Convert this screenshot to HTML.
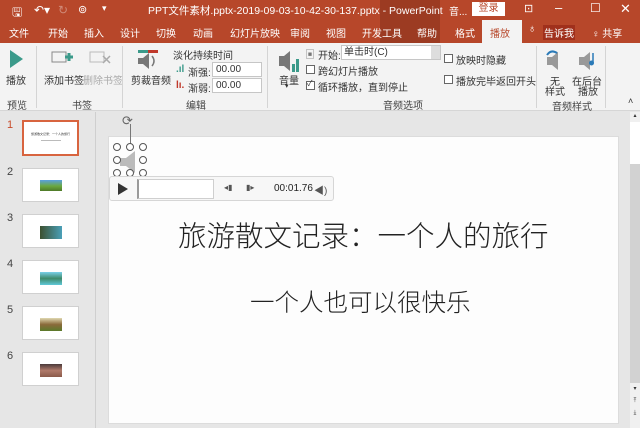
<!DOCTYPE html>
<html><head><meta charset="utf-8"><style>
*{margin:0;padding:0;box-sizing:border-box}
body{width:640px;height:428px;overflow:hidden;background:#e6e6e6;font-family:"Liberation Sans","Noto Sans CJK SC",sans-serif;font-size:10px;color:#333;position:relative}
.a{position:absolute;white-space:nowrap}
.w{color:#fff}
.cb{position:absolute;width:9px;height:9px;border:1px solid #666;background:#fff}
.th{position:absolute;left:22px;width:57px;background:#fff;border:1px solid #d0d0d0}
.num{position:absolute;left:7px;font-size:11px;color:#444}
.gl{position:absolute;top:97px;font-size:10px;color:#444}
.sep{position:absolute;top:46px;width:1px;height:62px;background:#d4d4d4}
.h{position:absolute;width:8px;height:8px;border:1px solid #555;border-radius:50%;background:#fff}
</style></head><body>
<div class="a" style="left:0;top:0;width:640px;height:43px;background:#b7472a"></div>
<div class="a" style="left:380px;top:0;width:60px;height:43px;background:#9c3b22"></div>
<div class="a w" style="left:12px;top:3px;font-size:12px">🖫</div>
<div class="a w" style="left:34px;top:3px;font-size:12px">↶▾</div>
<div class="a" style="left:58px;top:3px;font-size:12px;color:#d08a78">↻</div>
<div class="a w" style="left:78px;top:3px;font-size:11px">⊚</div>
<div class="a w" style="left:102px;top:3px;font-size:9px">▾</div>
<div class="a w" style="left:148px;top:3px;font-size:10.5px">PPT文件素材.pptx-2019-09-03-10-42-30-137.pptx  -  PowerPoint</div>
<div class="a w" style="left:449px;top:3px;font-size:10px">音...</div>
<div class="a" style="left:472px;top:2px;width:33px;height:14px;background:#fff;color:#b7472a;font-size:10px;text-align:center;line-height:14px">登录</div>
<div class="a w" style="left:524px;top:2px;font-size:11px">⊡</div>
<div class="a w" style="left:555px;top:0px;font-size:13px">–</div>
<div class="a w" style="left:590px;top:1px;font-size:12px">☐</div>
<div class="a w" style="left:620px;top:1px;font-size:13px">✕</div>
<div class="a w" style="left:9px;top:25px">文件</div>
<div class="a w" style="left:48px;top:25px">开始</div>
<div class="a w" style="left:84px;top:25px">插入</div>
<div class="a w" style="left:120px;top:25px">设计</div>
<div class="a w" style="left:156px;top:25px">切换</div>
<div class="a w" style="left:193px;top:25px">动画</div>
<div class="a w" style="left:230px;top:25px">幻灯片放映</div>
<div class="a w" style="left:290px;top:25px">审阅</div>
<div class="a w" style="left:326px;top:25px">视图</div>
<div class="a w" style="left:362px;top:25px">开发工具</div>
<div class="a w" style="left:417px;top:25px">帮助</div>
<div class="a w" style="left:455px;top:25px">格式</div>
<div class="a" style="left:482px;top:20px;width:40px;height:23px;background:#f3f3f3"></div>
<div class="a" style="left:490px;top:25px;color:#b7472a">播放</div>
<div class="a w" style="left:528px;top:23px;font-size:11px">♁</div>
<div class="a" style="left:543px;top:25px;color:#fff;background:#a0301c;padding:0 1px">告诉我</div>
<div class="a w" style="left:592px;top:25px">♀ 共享</div>
<div class="a" style="left:0;top:43px;width:640px;height:68px;background:#f3f3f3;border-bottom:1px solid #d6d6d6"></div>
<svg class="a" style="left:8px;top:49px" width="16" height="20"><path d="M2 1L15 10L2 19Z" fill="#3b9a8a"/></svg>
<div class="a" style="left:6px;top:72px">播放</div>
<div class="gl" style="left:7px">预览</div>
<div class="sep" style="left:36px"></div>
<svg class="a" style="left:50px;top:48px" width="24" height="20"><rect x="2" y="4" width="14" height="10" fill="none" stroke="#888"/><path d="M15 9h8M19 5v8" stroke="#3b9a8a" stroke-width="3"/></svg>
<svg class="a" style="left:88px;top:48px" width="24" height="20"><rect x="2" y="4" width="14" height="10" fill="none" stroke="#bbb"/><path d="M15 8l7 7M22 8l-7 7" stroke="#aaa" stroke-width="1.5"/></svg>
<div class="a" style="left:44px;top:72px">添加书签</div>
<div class="a" style="left:83px;top:72px;color:#aaa">删除书签</div>
<div class="gl" style="left:72px">书签</div>
<div class="sep" style="left:122px"></div>
<svg class="a" style="left:135px;top:48px" width="26" height="24"><rect x="3" y="2" width="20" height="3" fill="#3b9a8a"/><rect x="13" y="2" width="10" height="3" fill="#c0392b"/><path d="M3 10h5l6-5v16l-6-5H3z" fill="#777"/><path d="M17 8q4 5 0 10" stroke="#777" fill="none" stroke-width="1.5"/></svg>
<div class="a" style="left:131px;top:72px">剪裁音频</div>
<div class="a" style="left:173px;top:47px">淡化持续时间</div>
<div class="a" style="left:176px;top:64px;color:#3b9a8a;font-weight:bold">.ıl</div>
<div class="a" style="left:188px;top:64px">渐强:</div>
<div class="a" style="left:212px;top:62px;width:50px;height:15px;background:#fff;border:1px solid #c6c6c6;padding-left:3px;line-height:13px">00.00</div>
<div class="a" style="left:176px;top:80px;color:#c0392b;font-weight:bold">lı.</div>
<div class="a" style="left:188px;top:80px">渐弱:</div>
<div class="a" style="left:212px;top:78px;width:50px;height:15px;background:#fff;border:1px solid #c6c6c6;padding-left:3px;line-height:13px">00.00</div>
<div class="gl" style="left:186px">编辑</div>
<div class="sep" style="left:267px"></div>
<svg class="a" style="left:277px;top:49px" width="24" height="24"><path d="M2 7h5l6-5v20l-6-5H2z" fill="#777"/><rect x="15" y="15" width="3" height="8" fill="#3b9a8a"/><rect x="19" y="10" width="3" height="13" fill="#3b9a8a"/></svg>
<div class="a" style="left:279px;top:72px">音量</div>
<div class="a" style="left:285px;top:82px;font-size:7px">▾</div>
<div class="a" style="left:305px;top:46px;font-size:10px;color:#777">▣</div>
<div class="a" style="left:318px;top:47px">开始:</div>
<div class="a" style="left:341px;top:45px;width:100px;height:15px;background:#fff;border:1px solid #c6c6c6;padding-left:2px;line-height:13px">单击时(C)</div>
<div class="a" style="left:431px;top:46px;width:9px;height:13px;background:#ddd"></div>
<div class="cb" style="left:306px;top:65px"></div><div class="a" style="left:318px;top:63px">跨幻灯片播放</div>
<div class="cb" style="left:306px;top:81px"></div><div class="a" style="left:307px;top:78px;font-size:8px">✓</div><div class="a" style="left:318px;top:79px">循环播放，直到停止</div>
<div class="cb" style="left:444px;top:54px"></div><div class="a" style="left:456px;top:52px">放映时隐藏</div>
<div class="cb" style="left:444px;top:75px"></div><div class="a" style="left:456px;top:73px">播放完毕返回开头</div>
<div class="gl" style="left:383px">音频选项</div>
<div class="sep" style="left:536px"></div>
<svg class="a" style="left:543px;top:47px" width="22" height="24"><path d="M4 10h5l6-5v18l-6-5H4z" fill="#999"/><path d="M4 8q4-6 10-2" stroke="#2a7ab8" stroke-width="2" fill="none"/></svg>
<div class="a" style="left:550px;top:73px">无</div><div class="a" style="left:545px;top:83px">样式</div>
<svg class="a" style="left:577px;top:47px" width="22" height="24"><path d="M2 10h5l6-5v18l-6-5H2z" fill="#999"/><path d="M16 6v10" stroke="#2a7ab8" stroke-width="1.5"/><circle cx="14.5" cy="16" r="2.5" fill="#2a7ab8"/></svg>
<div class="a" style="left:572px;top:73px">在后台</div><div class="a" style="left:578px;top:83px">播放</div>
<div class="gl" style="left:552px;top:98px">音频样式</div>
<div class="sep" style="left:605px"></div>
<div class="a" style="left:628px;top:96px;font-size:9px">˄</div>
<div class="a" style="left:95px;top:112px;width:1px;height:316px;background:#cfcfcf"></div>
<div class="num" style="top:119px;color:#c84b2b">1</div>
<div class="th" style="top:120px;height:36px;border:2px solid #d8643f"><div style="font-size:3px;text-align:center;margin-top:10px;color:#333">旅游散文记录：一个人的旅行</div><div style="height:1px;width:20px;background:#bbb;margin:4px auto"></div></div>
<div class="num" style="top:166px">2</div>
<div class="th" style="top:168px;height:34px"><div style="width:22px;height:11px;margin:11px auto 0;background:linear-gradient(#5aa0e0,#6aa840 55%,#4e7a28)"></div></div>
<div class="num" style="top:212px">3</div>
<div class="th" style="top:214px;height:34px"><div style="width:22px;height:13px;margin:11px auto 0;background:linear-gradient(90deg,#3c5030,#4aa0b8)"></div></div>
<div class="num" style="top:258px">4</div>
<div class="th" style="top:260px;height:34px"><div style="width:22px;height:13px;margin:11px auto 0;background:linear-gradient(#7ad0e8,#3e8a6a 50%,#60c8d8)"></div></div>
<div class="num" style="top:304px">5</div>
<div class="th" style="top:306px;height:34px"><div style="width:22px;height:13px;margin:11px auto 0;background:linear-gradient(#e0d8b0,#8a6a3a 50%,#5a7a2a)"></div></div>
<div class="num" style="top:350px">6</div>
<div class="th" style="top:352px;height:34px"><div style="width:22px;height:13px;margin:11px auto 0;background:linear-gradient(#4a3a3a,#b07a6a 50%,#8a5a4a)"></div></div>
<div class="a" style="left:108px;top:136px;width:511px;height:288px;background:#fdfdfd;border:1px solid #dcdcdc"></div>
<div class="a" style="left:178px;top:214px;font-size:28.5px;color:#222;font-family:'Noto Sans CJK SC',sans-serif;font-weight:300">旅游散文记录：一个人的旅行</div>
<div class="a" style="left:250px;top:284px;font-size:24.5px;color:#222;font-family:'Noto Sans CJK SC',sans-serif;font-weight:300">一个人也可以很快乐</div>
<div class="a" style="left:130px;top:124px;width:1px;height:22px;background:#777"></div>
<div class="a" style="left:122px;top:113px;font-size:13px;color:#666">⟳</div>
<svg class="a" style="left:112px;top:145px" width="36" height="34"><path d="M8 13h6l9-7v22l-9-7H8z" fill="#bbb"/></svg>
<div class="h" style="left:113px;top:143px"></div><div class="h" style="left:126px;top:143px"></div><div class="h" style="left:139px;top:143px"></div>
<div class="h" style="left:113px;top:156px"></div><div class="h" style="left:139px;top:156px"></div>
<div class="h" style="left:113px;top:169px"></div><div class="h" style="left:126px;top:169px"></div><div class="h" style="left:139px;top:169px"></div>
<div class="a" style="left:109px;top:176px;width:225px;height:25px;background:#f7f7f7;border:1px solid #d6d6d6;border-radius:3px"></div>
<svg class="a" style="left:117px;top:182px" width="12" height="14"><path d="M1 1L11 7L1 13Z" fill="#333"/></svg>
<div class="a" style="left:137px;top:179px;width:77px;height:20px;background:#fff;border:1px solid #cfcfcf;border-left:2px solid #999"></div>
<div class="a" style="left:224px;top:183px;font-size:8px;color:#555">◂▮</div>
<div class="a" style="left:246px;top:183px;font-size:8px;color:#555">▮▸</div>
<div class="a" style="left:274px;top:183px;font-size:10px;color:#222">00:01.76</div>
<div class="a" style="left:314px;top:182px;font-size:10px;color:#555">◀)</div>
<div class="a" style="left:630px;top:112px;width:10px;height:316px;background:#d2d2d2"></div>
<div class="a" style="left:630px;top:112px;width:10px;height:10px;background:#f0f0f0;font-size:6px;text-align:center">▴</div>
<div class="a" style="left:630px;top:122px;width:10px;height:42px;background:#fff"></div>
<div class="a" style="left:630px;top:383px;width:10px;height:45px;background:#f0f0f0;font-size:6px;text-align:center;line-height:12px">▾<br>⤒<br>⤓</div>
</body></html>
